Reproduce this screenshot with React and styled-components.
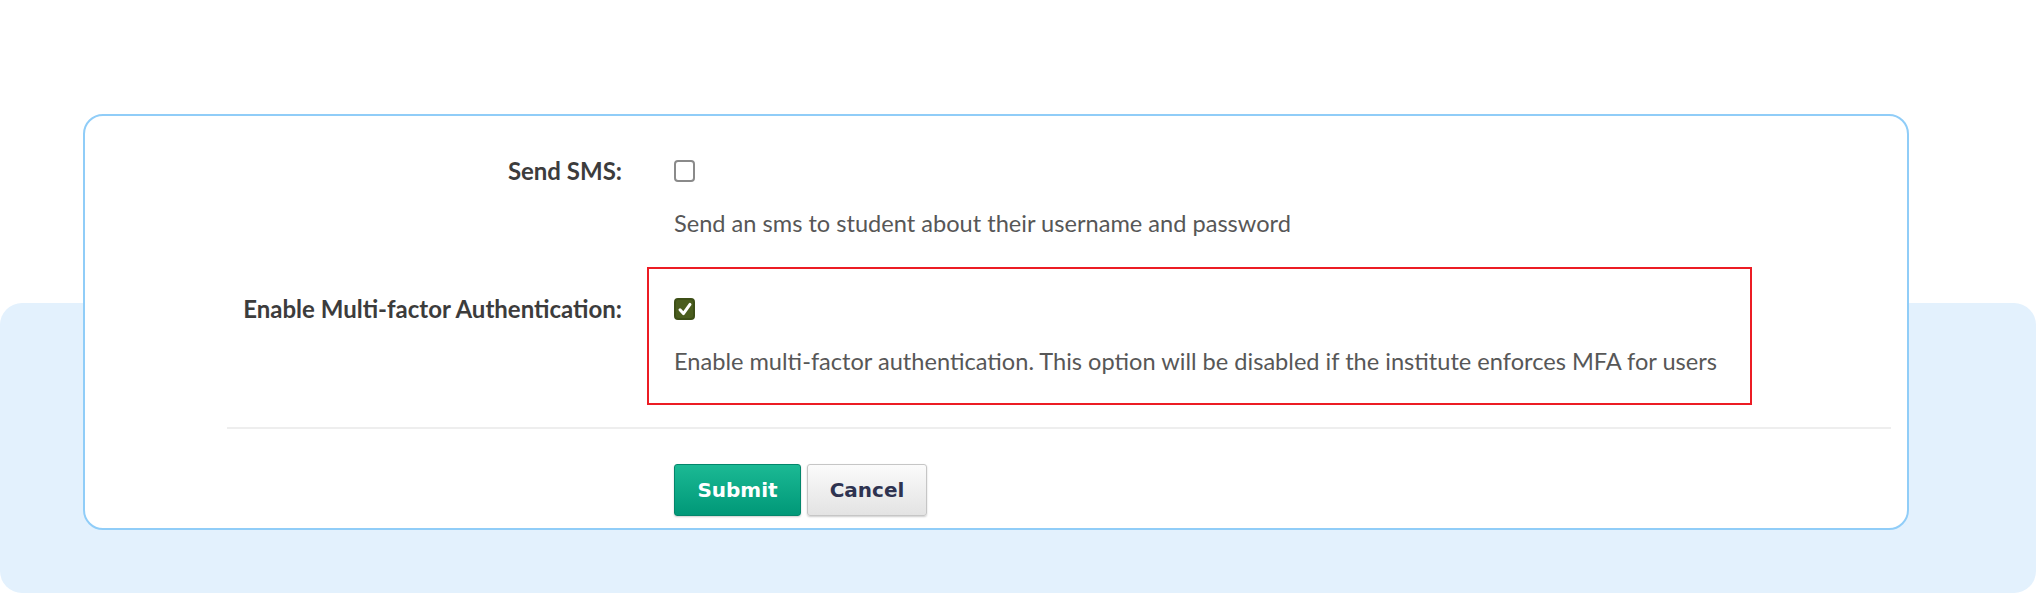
import React from "react";
import styled, { createGlobalStyle } from "styled-components";

const GlobalStyle = createGlobalStyle`
  html, body {
    margin: 0;
    padding: 0;
    background: #ffffff;
  }
  body {
    font-family: "Lato", "Liberation Sans", sans-serif;
  }
`;

const Page = styled.div`
  position: relative;
  width: 2036px;
  height: 594px;
  padding: 114px 127px 0 83px;
  box-sizing: border-box;
  overflow: hidden;

  /* pale blue band behind the card */
  &::before {
    content: "";
    position: absolute;
    left: 0;
    right: 0;
    top: 303px;
    height: 290px;
    background: #e3f1fd;
    border-radius: 22px;
  }
`;

const Card = styled.div`
  position: relative;
  z-index: 1;
  height: 416px;
  box-sizing: border-box;
  background: #ffffff;
  border: 2px solid #90cdf8;
  border-radius: 20px;
  padding: 13px 16px 12px 0;
  display: flex;
  flex-direction: column;
`;

const Row = styled.div`
  display: grid;
  grid-template-columns: 537px auto;
  column-gap: 25px;
  align-items: start;
  justify-content: start;
`;

const Label = styled.div`
  text-align: right;
  font-size: 24px;
  line-height: 24px;
  font-weight: 700;
  color: #3c3c3c;
  padding-top: 30px;
  white-space: nowrap;
`;

const Field = styled.div`
  border: 2px solid ${(p) => (p.$marked ? "#ec1c24" : "transparent")};
  padding: 29px 33px 30px 25px;
  display: flex;
  flex-direction: column;
  align-items: flex-start;
  gap: 29px;
`;

const Box = styled.span`
  width: 21px;
  height: 22px;
  box-sizing: border-box;
  border-radius: 4px;
  display: flex;
  align-items: center;
  justify-content: center;
  background: ${(p) => (p.$checked ? "#4a5d1e" : "#ffffff")};
  border: 2px solid ${(p) => (p.$checked ? "#3d4f17" : "#8a8a8a")};
`;

const Hint = styled.div`
  font-size: 23.6px;
  line-height: 24px;
  color: #575757;
  white-space: nowrap;
`;

const Divider = styled.div`
  height: 2px;
  background: #eeeeee;
  margin: 22px 0 35px 142px;
`;

const Actions = styled.div`
  display: flex;
  gap: 6px;
  padding-left: 589px;
`;

const Button = styled.button`
  height: 52px;
  padding: 0;
  width: ${(p) => (p.$primary ? "127px" : "120px")};
  border-radius: 3px;
  font-family: "DejaVu Sans", "Liberation Sans", sans-serif;
  font-size: 20px;
  font-weight: 700;
  cursor: pointer;
  color: ${(p) => (p.$primary ? "#ffffff" : "#2e3350")};
  background: ${(p) =>
    p.$primary
      ? "linear-gradient(#1bb994, #009878)"
      : "linear-gradient(#fbfbfb, #e3e3e3)"};
  border: 1px solid ${(p) => (p.$primary ? "#03866b" : "#c6c6c6")};
  box-shadow: 0 1px 2px rgba(0, 0, 0, 0.2);
`;

const Checkbox = ({ checked }) => (
  <Box $checked={checked}>
    {checked && (
      <svg width="16" height="16" viewBox="0 0 16 16">
        <path
          d="M3 8.8 L6.4 12.6 L13 3.4"
          fill="none"
          stroke="#ffffff"
          strokeWidth="3"
          strokeLinecap="round"
          strokeLinejoin="round"
        />
      </svg>
    )}
  </Box>
);

const options = [
  {
    label: "Send SMS:",
    hint: "Send an sms to student about their username and password",
    checked: false,
    marked: false,
  },
  {
    label: "Enable Multi-factor Authentication:",
    hint:
      "Enable multi-factor authentication. This option will be disabled if the institute enforces MFA for users",
    checked: true,
    marked: true,
  },
];

export default function App() {
  return (
    <>
      <GlobalStyle />
      <Page>
        <Card>
          {options.map((o) => (
            <Row key={o.label}>
              <Label>{o.label}</Label>
              <Field $marked={o.marked}>
                <Checkbox checked={o.checked} />
                <Hint>{o.hint}</Hint>
              </Field>
            </Row>
          ))}
          <Divider />
          <Actions>
            <Button $primary>Submit</Button>
            <Button>Cancel</Button>
          </Actions>
        </Card>
      </Page>
    </>
  );
}
